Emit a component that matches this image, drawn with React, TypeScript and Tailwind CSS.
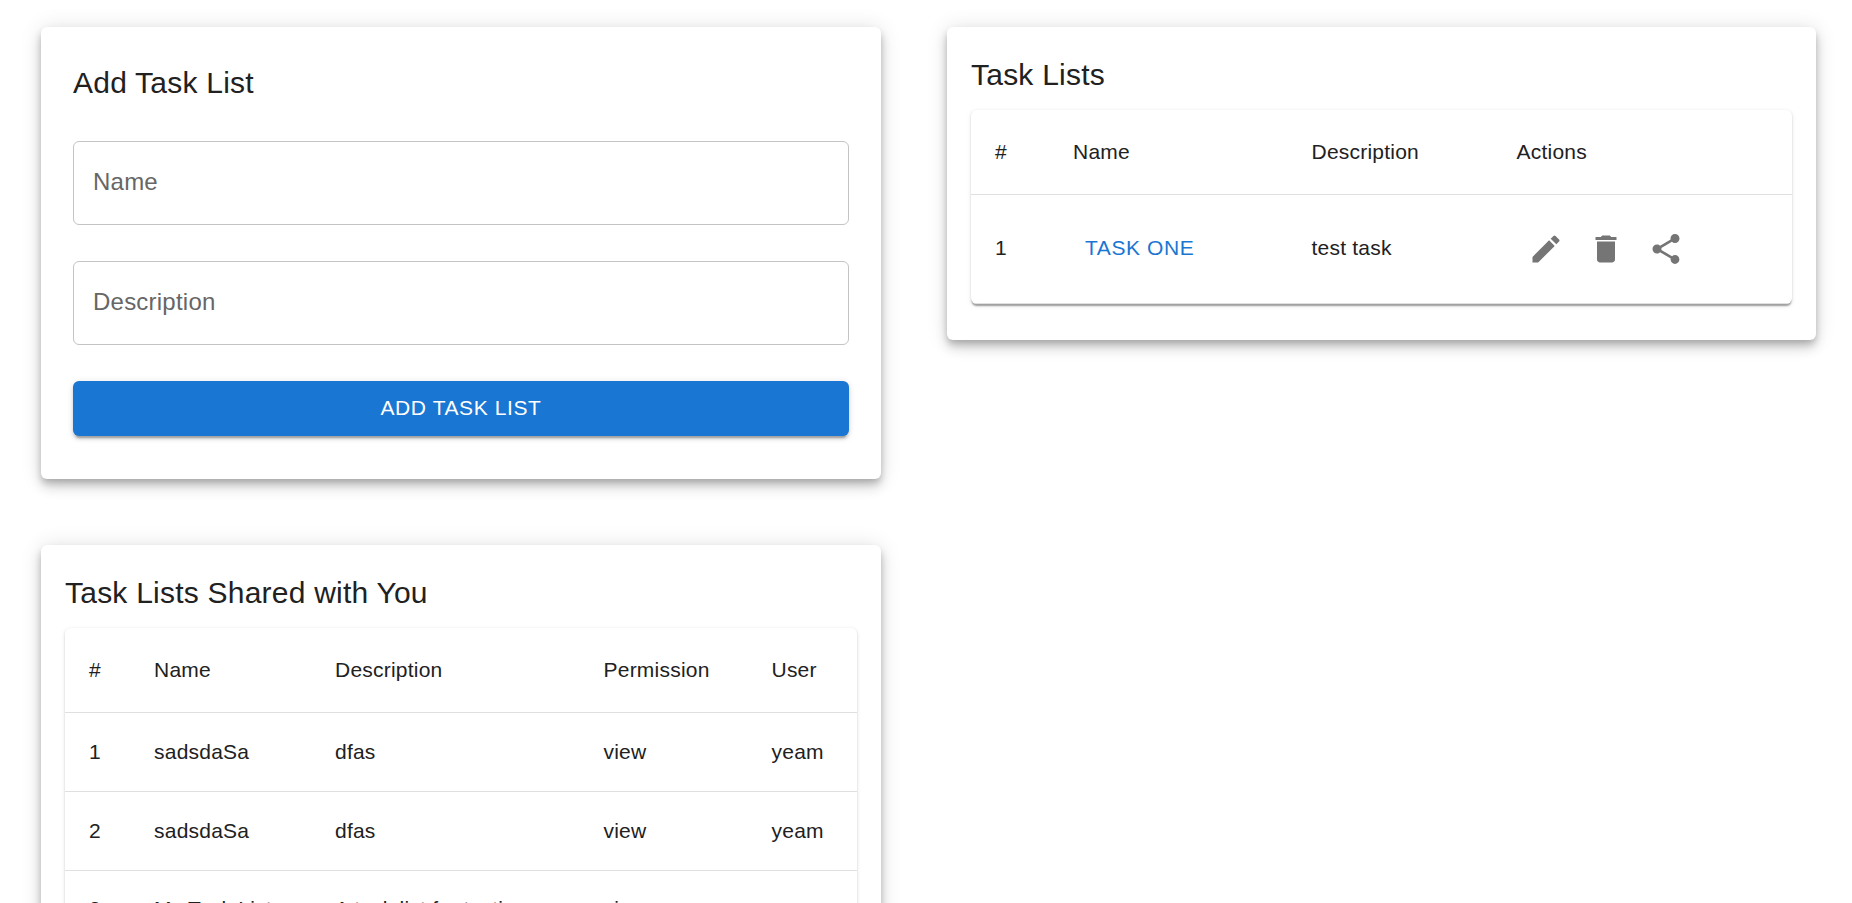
import type { ReactNode } from "react";

const cardShadow =
  "shadow-[0px_4.5px_7.5px_-1.5px_rgba(0,0,0,0.2),0px_7.5px_12px_0px_rgba(0,0,0,0.14),0px_1.5px_21px_0px_rgba(0,0,0,0.12)]";
const tableShadow =
  "shadow-[0px_3px_1.5px_-1.5px_rgba(0,0,0,0.2),0px_1.5px_1.5px_0px_rgba(0,0,0,0.14),0px_1.5px_4.5px_0px_rgba(0,0,0,0.12)]";

function Card({ className, children }: { className: string; children: ReactNode }) {
  return <section className={`rounded-md bg-white ${cardShadow} ${className}`}>{children}</section>;
}

function Title({ children }: { children: ReactNode }) {
  return <h2 className="text-[30px] leading-12 tracking-[0.0075em]">{children}</h2>;
}

function Field({ label }: { label: string }) {
  return (
    <input
      aria-label={label}
      placeholder={label}
      className="block h-21 w-full rounded-md border border-[#c4c4c4] px-[19px] pb-0.5 text-2xl tracking-[0.00938em] outline-none placeholder:text-[#666666]"
    />
  );
}

const head = "border-b border-[#e0e0e0] px-6 text-left font-normal";
const cell = "border-b border-[#e0e0e0] px-6";

function IconButton({ label, d }: { label: string; d: string }) {
  return (
    <button aria-label={label} className="flex size-15 items-center justify-center rounded-full text-[#757575]">
      <svg viewBox="0 0 24 24" className="size-9" fill="currentColor">
        <path d={d} />
      </svg>
    </button>
  );
}

const EDIT =
  "M3 17.25V21h3.75L17.81 9.94l-3.75-3.75zM20.71 7.04c.39-.39.39-1.02 0-1.41l-2.34-2.34a.996.996 0 0 0-1.41 0l-1.83 1.83 3.75 3.75z";
const DELETE = "M6 19c0 1.1.9 2 2 2h8c1.1 0 2-.9 2-2V7H6zM19 4h-3.5l-1-1h-5l-1 1H5v2h14z";
const SHARE =
  "M18 16.08c-.76 0-1.44.3-1.96.77L8.91 12.7c.05-.23.09-.46.09-.7s-.04-.47-.09-.7l7.05-4.11c.54.5 1.25.81 2.04.81 1.66 0 3-1.34 3-3s-1.34-3-3-3-3 1.34-3 3c0 .24.04.47.09.7L8.04 9.81C7.5 9.31 6.79 9 6 9c-1.66 0-3 1.34-3 3s1.34 3 3 3c.79 0 1.5-.31 2.04-.81l7.12 4.16c-.05.21-.08.43-.08.65 0 1.61 1.31 2.92 2.92 2.92s2.92-1.31 2.92-2.92-1.31-2.92-2.92-2.92";

const shared = [
  { name: "sadsdaSa", description: "dfas", permission: "view", user: "yeam" },
  { name: "sadsdaSa", description: "dfas", permission: "view", user: "yeam" },
  { name: "My Task List", description: "A task list for testing", permission: "view", user: "yeam" },
];

export default function App() {
  return (
    <main className="flex h-screen items-start gap-[66px] overflow-hidden bg-white pt-[27px] pl-[41px] font-['Liberation_Sans',Arial,sans-serif] text-[#212121]">
      <div className="flex w-[840px] shrink-0 flex-col gap-[66px]">
        <Card className="h-[452px] px-8 pt-8">
          <Title>Add Task List</Title>
          <form className="mt-[34px] flex flex-col gap-9">
            <Field label="Name" />
            <Field label="Description" />
            <button
              type="button"
              className="h-[55px] rounded-md bg-[#1976d2] pb-0.5 text-[21px] tracking-[0.02857em] text-white uppercase shadow-[0px_4.5px_1.5px_-3px_rgba(0,0,0,0.2),0px_3px_3px_0px_rgba(0,0,0,0.14),0px_1.5px_7.5px_0px_rgba(0,0,0,0.12)]"
            >
              Add Task List
            </button>
          </form>
        </Card>

        <Card className="px-6 pt-6 pb-9">
          <Title>Task Lists Shared with You</Title>
          <div className={`mt-[11px] overflow-hidden rounded-md ${tableShadow}`}>
            <table className="w-full table-fixed border-separate border-spacing-0 text-[21px] tracking-[0.01071em]">
              <colgroup>
                <col className="w-[65px]" />
                <col className="w-[181px]" />
                <col className="w-[268.5px]" />
                <col className="w-[168px]" />
                <col />
              </colgroup>
              <thead>
                <tr className="h-[85px]">
                  <th className={head}>#</th>
                  <th className={head}>Name</th>
                  <th className={head}>Description</th>
                  <th className={head}>Permission</th>
                  <th className={head}>User</th>
                </tr>
              </thead>
              <tbody>
                {shared.map((row, i) => (
                  <tr key={i} className="h-[79px] last:*:pb-0.5">
                    <td className={cell}>{i + 1}</td>
                    <td className={cell}>{row.name}</td>
                    <td className={cell}>{row.description}</td>
                    <td className={cell}>{row.permission}</td>
                    <td className={cell}>{row.user}</td>
                  </tr>
                ))}
              </tbody>
            </table>
          </div>
        </Card>
      </div>

      <Card className="w-[869px] shrink-0 px-6 pt-6 pb-9">
        <Title>Task Lists</Title>
        <div className={`mt-[11px] overflow-hidden rounded-md ${tableShadow}`}>
          <table className="w-full table-fixed border-separate border-spacing-0 text-[21px] tracking-[0.01071em]">
            <colgroup>
              <col className="w-[78px]" />
              <col className="w-[238.5px]" />
              <col className="w-[205px]" />
              <col />
            </colgroup>
            <thead>
              <tr className="h-[85px]">
                <th className={head}>#</th>
                <th className={head}>Name</th>
                <th className={head}>Description</th>
                <th className={head}>Actions</th>
              </tr>
            </thead>
            <tbody>
              <tr className="h-[109px]">
                <td className={`${cell} pb-0.5`}>1</td>
                <td className={`${cell} pb-0.5`}>
                  <button className="px-3 tracking-[0.02857em] text-[#1976d2] uppercase">Task One</button>
                </td>
                <td className={`${cell} pb-0.5`}>test task</td>
                <td className={cell}>
                  <div className="-ml-px flex">
                    <IconButton label="Edit" d={EDIT} />
                    <IconButton label="Delete" d={DELETE} />
                    <IconButton label="Share" d={SHARE} />
                  </div>
                </td>
              </tr>
            </tbody>
          </table>
        </div>
      </Card>
    </main>
  );
}
